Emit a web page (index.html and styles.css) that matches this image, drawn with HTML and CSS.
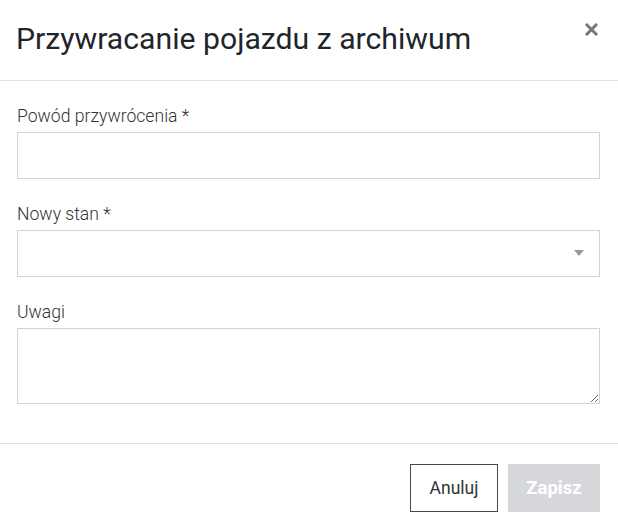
FILE: index.html
```html
<!DOCTYPE html>
<html lang="pl">
<head>
<meta charset="utf-8">
<link rel="stylesheet" href="styles.css">
</head>
<body>
<div class="modal">
  <div class="modal-header">
    <h1 class="modal-title">Przywracanie pojazdu z archiwum</h1>
    <button class="close" type="button" aria-label="Zamknij">
      <svg width="13" height="13" viewBox="0 0 13 13"><path d="M2 2L11 11M11 2L2 11" stroke="#777" stroke-width="3" stroke-linecap="square"/></svg>
    </button>
  </div>
  <div class="modal-body">
    <div class="group">
      <label class="label">Powód przywrócenia *</label>
      <input class="control" type="text">
    </div>
    <div class="group">
      <label class="label">Nowy stan *</label>
      <div class="select-wrap">
        <select class="control select"><option></option></select>
        <span class="caret"></span>
      </div>
    </div>
    <div class="group">
      <label class="label">Uwagi</label>
      <textarea class="control area"></textarea>
    </div>
  </div>
  <div class="modal-footer">
    <button class="btn btn-outline" type="button">Anuluj</button>
    <button class="btn btn-disabled" type="button">Zapisz</button>
  </div>
</div>
</body>
</html>
```

FILE: styles.css
```css
* { box-sizing: border-box; }
html, body { margin: 0; padding: 0; background: #fff; }
body { font-family: Roboto, "Liberation Sans", sans-serif; color: #333; }
.modal { width: 618px; }
.modal-header {
  display: flex;
  justify-content: space-between;
  align-items: flex-start;
  padding: 21px 17px 23px 16px;
  border-bottom: 1px solid #dee2e6;
}
.modal-title {
  margin: 0;
  font-size: 30.2px;
  font-weight: 400;
  line-height: 36px;
  color: #212529;
}
.close {
  border: 0;
  background: none;
  padding: 0;
  margin: 2px 3px 0 0;
  width: 13px;
  height: 13px;
  display: block;
  cursor: pointer;
}
.close svg { display: block; }
.modal-body { padding: 23px 18px 16px 17px; }
.group { margin-bottom: 23px; }
.label {
  display: block;
  font-size: 17.6px;
  line-height: 24px;
  margin-bottom: 4px;
  color: #333;
  font-weight: 300;
}
.control {
  display: block;
  width: 100%;
  height: 47px;
  border: 1px solid #ced4da;
  border-radius: 0;
  background: #fff;
  font-family: inherit;
  font-size: 16px;
  padding: 6px 12px;
  margin: 0;
  outline: none;
}
.select-wrap { position: relative; }
.select { appearance: none; -webkit-appearance: none; }
.caret {
  position: absolute;
  right: 16px;
  top: 20px;
  width: 0;
  height: 0;
  border-left: 5.5px solid transparent;
  border-right: 5.5px solid transparent;
  border-top: 6px solid #999;
}
.area { height: 76px; resize: vertical; }
.modal-footer {
  display: flex;
  justify-content: flex-end;
  gap: 10px;
  padding: 20px 18px 16px;
  border-top: 1px solid #dee2e6;
}
.btn {
  height: 48px;
  font-family: inherit;
  border-radius: 0;
  padding: 0;
}
.btn-outline {
  width: 88px;
  background: #fff;
  border: 1px solid #3f4b50;
  color: #333;
  font-size: 17.5px;
  font-weight: 400;
}
.btn-disabled {
  width: 92px;
  background: #d6d7db;
  border: 1px solid #d6d7db;
  color: #fff;
  font-size: 18.5px;
  font-weight: 700;
}
```
